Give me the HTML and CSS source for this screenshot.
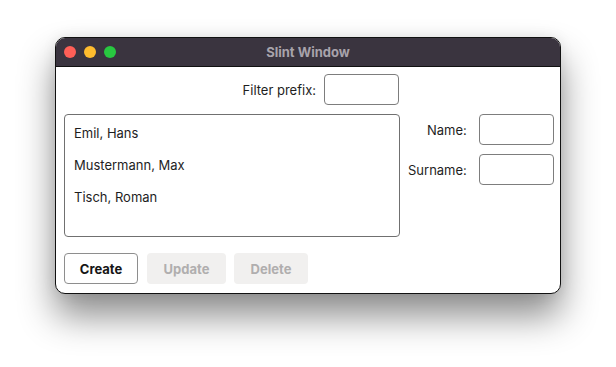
FILE: index.html
```html
<!DOCTYPE html>
<html>
<head>
<meta charset="utf-8">
<link rel="stylesheet" href="styles.css">
</head>
<body>
<div class="window">
  <div class="titlebar">
    <div class="lights">
      <span class="light red"></span>
      <span class="light yellow"></span>
      <span class="light green"></span>
    </div>
    <div class="title">Slint Window</div>
  </div>
  <div class="content">
    <div class="filter-row">
      <span class="label">Filter prefix:</span>
      <div class="input"></div>
    </div>
    <div class="spacer"></div>
    <div class="list">
      <div class="item">Emil, Hans</div>
      <div class="item">Mustermann, Max</div>
      <div class="item">Tisch, Roman</div>
    </div>
    <div class="form">
      <span class="label">Name:</span>
      <div class="input"></div>
      <span class="label">Surname:</span>
      <div class="input"></div>
    </div>
    <div class="buttons">
      <div class="btn primary">Create</div>
      <div class="btn disabled">Update</div>
      <div class="btn disabled">Delete</div>
    </div>
  </div>
</div>
</body>
</html>
```
FILE: styles.css
```css
html, body {
  margin: 0;
  padding: 0;
  background: #ffffff;
}
html {
  height: 100%;
}
body {
  box-sizing: border-box;
  min-height: 367px;
  font-family: Inter, "Liberation Sans", sans-serif;
  font-size: 13px;
  color: #1e1e1e;
  padding-top: 37px;
  padding-left: 55px;
  padding-bottom: 60px;
}
.window {
  width: 504px;
  height: 255px;
  border: 1px solid #111;
  border-radius: 10px;
  overflow: hidden;
  background: #fff;
  box-shadow: 0 22px 36px rgba(0, 0, 0, 0.45), 0 0 14px rgba(0, 0, 0, 0.08);
  display: flex;
  flex-direction: column;
}
.titlebar {
  height: 28px;
  background: #3a343f;
  border-bottom: 1px solid #111;
  display: flex;
  align-items: center;
  position: relative;
}
.lights {
  display: flex;
  gap: 8px;
  padding-left: 8px;
}
.light {
  width: 12px;
  height: 12px;
  border-radius: 50%;
  display: block;
}
.red { background: #fe5f57; }
.yellow { background: #febc2e; }
.green { background: #28c840; }
.title {
  position: absolute;
  left: 0;
  right: 0;
  top: 0;
  bottom: 0;
  display: flex;
  align-items: center;
  justify-content: center;
  font-weight: 700;
  color: #a8a3ab;
  font-size: 13px;
}
.content {
  flex: 1;
  padding: 7px 8px 8px 8px;
  display: grid;
  grid-template-columns: 336px 144px;
  grid-template-rows: 31px 9px 123px 16px 31px;
  column-gap: 8px;
}
.filter-row {
  grid-column: 1;
  grid-row: 1;
  display: flex;
  align-items: center;
  justify-content: flex-end;
  gap: 8px;
  padding-right: 1px;
}
.spacer { grid-row: 2; }
.label {
  white-space: nowrap;
}
.input {
  width: 73px;
  height: 29px;
  border: 1px solid #7d7d7d;
  border-radius: 4px;
  background: #fff;
}
.list {
  grid-column: 1;
  grid-row: 3;
  border: 1px solid #707070;
  border-radius: 4px;
  padding: 2px 0 0 9px;
  display: flex;
  flex-direction: column;
}
.item {
  height: 32px;
  line-height: 32px;
}
.form {
  grid-column: 2;
  grid-row: 3;
  display: grid;
  grid-template-columns: 1fr 75px;
  grid-auto-rows: 31px;
  column-gap: 12px;
  row-gap: 9px;
  align-items: center;
  align-content: start;
}
.form .label {
  text-align: right;
}
.form .input {
  width: 73px;
}
.buttons {
  grid-column: 1;
  grid-row: 5;
  display: flex;
  gap: 9px;
}
.btn {
  height: 31px;
  box-sizing: border-box;
  border-radius: 4px;
  display: flex;
  align-items: center;
  justify-content: center;
  font-weight: 700;
  font-size: 13px;
}
.btn.primary {
  width: 74px;
  border: 1px solid #8e8e8e;
  background: #fff;
  color: #161616;
}
.btn.disabled {
  width: 79px;
  background: #f1f0ef;
  color: #b0aeae;
}
.btn.disabled:last-child {
  width: 74px;
  margin-left: -1px;
}
```
